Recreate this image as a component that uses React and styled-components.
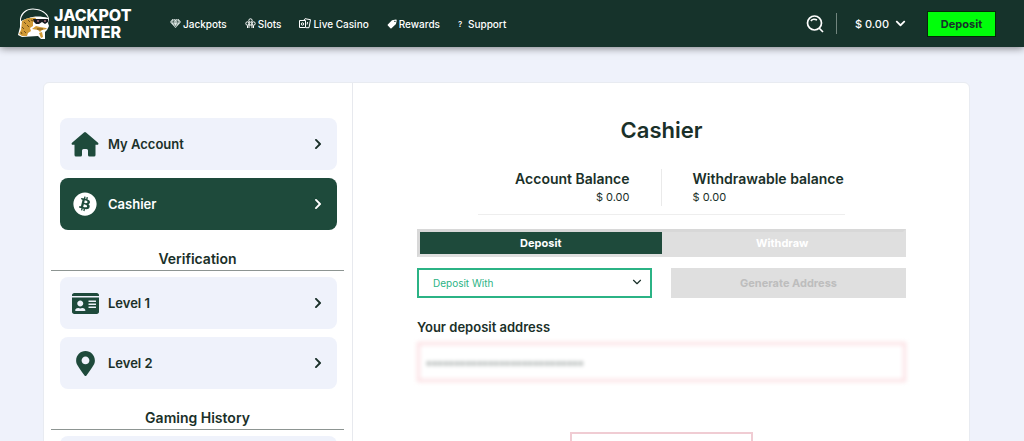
import React from 'react'
import styled, { createGlobalStyle } from 'styled-components'
import { FaChevronDown, FaBitcoin, FaIdCard, FaChevronRight, FaMapMarkerAlt } from 'react-icons/fa'
import { LuChevronDown } from 'react-icons/lu'

const COLORS = {
  HEADER: '#16332b',
  GREEN: '#1e4a3b',
  TEXT: '#1a3029',
  PAGE: '#eff2fb',
  LIME: '#00ff0a',
  TEAL: '#2bb385',
  GREY: '#dfdfdf',
  GOLD: '#d19a35',
}

const GlobalStyle = createGlobalStyle`
  * {
    box-sizing: border-box;
  }
  html {
    scrollbar-width: none;
  }
  body {
    margin: 0;
    background: ${COLORS.PAGE};
    color: ${COLORS.TEXT};
    font-family: Inter, sans-serif;
  }
  button,
  select,
  input {
    font-family: inherit;
    margin: 0;
  }
`

const Header = styled.header`
  display: flex;
  align-items: center;
  height: 47px;
  padding: 0 28px 0 16px;
  background: ${COLORS.HEADER};
  color: white;
  box-shadow: 0 1px 8px rgba(0, 0, 0, 0.5);
`

const Brand = styled.a`
  display: flex;
  align-items: center;
  gap: 4px;
  width: 154px;
  color: white;
  font-size: 16px;
  line-height: 17px;
  font-weight: 800;
  text-decoration: none;
`

const Nav = styled.nav`
  display: flex;
  gap: 18px;
  flex: 1;
`

const NavLink = styled.a`
  display: flex;
  align-items: center;
  gap: 2px;
  color: white;
  font-size: 10px;
  font-weight: 500;
  white-space: nowrap;
  text-decoration: none;
`

const Mark = styled.span`
  width: 8px;
  font-size: 8px;
`

const IconButton = styled.button`
  display: flex;
  padding: 0;
  border: 0;
  background: none;
  color: white;
`

const Wallet = styled.button`
  display: flex;
  align-items: center;
  gap: 6px;
  height: 21px;
  margin-left: 12px;
  padding: 0 0 0 18px;
  border: 0;
  border-left: 1px solid #71857e;
  background: none;
  color: white;
  font-size: 11px;
  font-weight: 500;
`

const DepositButton = styled.button`
  width: 69px;
  height: 26px;
  margin-left: 21px;
  padding: 0;
  border: 1px solid #062808;
  background: ${COLORS.LIME};
  color: ${COLORS.HEADER};
  font-size: 11px;
  font-weight: 700;
`

const Card = styled.div`
  display: flex;
  margin: 35px 54px 0 43px;
  border: 1px solid #e8ebf1;
  border-radius: 6px;
  background: white;
`

const Sidebar = styled.aside`
  flex: none;
  width: 309px;
  padding: 35px 15px 0 16px;
  border-right: 1px solid #e7e9ee;
`

const Menu = styled.div`
  display: flex;
  flex-direction: column;
  gap: 8px;
`

const MenuItem = styled.a`
  display: flex;
  align-items: center;
  height: 52px;
  padding: 0 13px 0 10px;
  border-radius: 8px;
  background: ${(props) => (props.$active ? COLORS.GREEN : COLORS.PAGE)};
  color: ${(props) => (props.$active ? 'white' : COLORS.TEXT)};
  font-size: 13px;
  font-weight: 600;
  text-decoration: none;
`

const MenuIcon = styled.span`
  display: flex;
  justify-content: center;
  width: 30px;
  margin-right: 8px;
  color: ${(props) => (props.$active ? 'white' : COLORS.GREEN)};
`

const MenuLabel = styled.span`
  flex: 1;
`

const GroupTitle = styled.h2`
  margin: 20px -7px 6px -9px;
  padding-bottom: 2px;
  border-bottom: 1px solid #8d9592;
  font-size: 14px;
  line-height: 18px;
  font-weight: 600;
  text-align: center;
`

const Main = styled.main`
  flex: 1;
  min-width: 0;
  padding: 32px 63px 40px 64px;
`

const Title = styled.h1`
  margin: 0 0 24px;
  font-size: 22px;
  line-height: 30px;
  font-weight: 600;
  text-align: center;
`

const Balances = styled.div`
  display: grid;
  grid-template-columns: 1fr 1fr;
  margin: 0 61px;
  padding-bottom: 8px;
  border-bottom: 1px solid #eeeeee;
`

const Balance = styled.div`
  padding-left: 31px;
  font-size: 11px;
  line-height: 18px;
  white-space: nowrap;

  &:first-child {
    padding: 0 31px 0 0;
    border-right: 1px solid #eaeaea;
    text-align: right;
  }
`

const BalanceName = styled.div`
  font-size: 14px;
  line-height: 19px;
  font-weight: 600;
`

const Tabs = styled.div`
  display: grid;
  grid-template-columns: 1fr 1fr;
  margin-top: 14px;
  border: 3px solid ${COLORS.GREY};
  border-top-color: #d8d8d8;
  border-left-color: #d8d8d8;
  background: ${COLORS.GREY};
`

const Tab = styled.button`
  height: 22px;
  padding: 0;
  border: 0;
  background: ${(props) => (props.$active ? COLORS.GREEN : COLORS.GREY)};
  color: white;
  font-size: 11px;
  font-weight: 700;
`

const FormRow = styled.div`
  display: grid;
  grid-template-columns: 1fr 1fr;
  gap: 19px;
  margin-top: 11px;
`

const SelectBox = styled.div`
  position: relative;

  svg {
    position: absolute;
    top: 7px;
    right: 8px;
    pointer-events: none;
  }
`

const Select = styled.select`
  display: block;
  width: 100%;
  height: 30px;
  padding: 0 14px;
  border: 2px solid ${COLORS.TEAL};
  border-radius: 0;
  appearance: none;
  background: white;
  color: ${COLORS.TEAL};
  font-size: 10px;
`

const GenerateButton = styled.button`
  height: 30px;
  border: 0;
  background: ${COLORS.GREY};
  color: #bdbdbd;
  font-size: 11px;
  font-weight: 700;
`

const AddressLabel = styled.label`
  display: block;
  margin: 20px 0 6px;
  font-size: 13px;
  line-height: 18px;
  font-weight: 600;
`

const Address = styled.input`
  display: block;
  width: 100%;
  height: 40px;
  padding: 0 6px;
  border: 3px solid #fbdfe2;
  border-radius: 0;
  background: white;
  color: #4d5a56;
  font-size: 10px;
  filter: blur(2px);
`

const QrFrame = styled.div`
  width: 183px;
  height: 183px;
  margin: 50px auto 0;
  border: 2px solid #f0ccd3;
`

const Logo = () => (
  <svg width="34" height="34" viewBox="0 0 34 34" fill="none">
    <path
      d="M4 12C5 4 13 0 21 2C28 3 33 8 33 12L32 16L33 19L31 23L29 25L29 32L25 32L22 29L6 30L2 28L4 20Z"
      fill="white"
    />
    <path d="M5 12C7 4 14 1 21 3C27 4 31 8 32 11C26 9 17 9 13 11C9 12 7 13 5 14Z" fill={COLORS.HEADER} />
    <path
      d="M6 14C10 11 15 10 20 11L19 14L17 15L17 19L14 21L15 24L12 26L11 29L6 29L3 27L5 23Z"
      fill={COLORS.GOLD}
    />
    <path d="M8 15l2 2M12 13l2 2M6 20l2 2M11 18l2 2M8 24l2 2M5 25l1 2M15 13l2 1" stroke="#6e4d17" />
    <path d="M17 12H32V15L29 17L26 15L23 17H20L18 15Z" fill="#171b20" />
    <path d="M21 14h2M28 14h2" stroke="#e893a0" />
    <path d="M16 22L20 19L24 20L30 21L31 22L26 23L24 25L22 23Z" fill={COLORS.GOLD} />
    <path d="M21 22h6" stroke="#6e4d17" />
    <path d="M23 26L26 25L27 30L25 31Z" fill={COLORS.GOLD} />
  </svg>
)

const SearchIcon = () => (
  <svg width="18" height="18" viewBox="0 0 18 18" fill="none" stroke="currentColor" strokeWidth="1.7">
    <circle cx="8.5" cy="8" r="7" />
    <path d="M13 13L17 17M5 6C6 4 9 4 11 5" />
  </svg>
)

const GemIcon = () => (
  <svg width="11" height="11" viewBox="0 0 11 11">
    <path d="M2.5 1h6L11 4 5.5 10 0 4Z" fill="#dfe8e5" />
    <path d="M.5 4h10M3.5 1L3 4l2.5 5L8 4 7.5 1M3 4l2.5-3L8 4" fill="none" stroke={COLORS.HEADER} strokeWidth=".5" />
  </svg>
)

const CloverIcon = () => (
  <svg width="11" height="11" viewBox="0 0 11 11" fill="none" stroke="white">
    <circle cx="5.5" cy="2.5" r="1.7" />
    <circle cx="2.5" cy="5.5" r="1.7" />
    <circle cx="8.5" cy="5.5" r="1.7" />
    <path d="M4 4v6M7 4v6M2.5 7.5v2.5M8.5 7.5v2.5M4 7h3" />
  </svg>
)

const CardsIcon = () => (
  <svg width="12" height="11" viewBox="0 0 12 11" fill="none" stroke="white">
    <path d="M.5 2.5h6v7h-6zM5 2L6 .7l5.5 1-1.5 8H7" />
    <circle cx="3.5" cy="6" r="1.2" />
    <path d="M8.5 4l-.4 2.5" />
  </svg>
)

const TagIcon = () => (
  <svg width="10" height="10" viewBox="0 0 10 10">
    <path d="M5 1.2L9 .6Q9.8.6 9.7 1.5L9 5L4.5 9.2Q4 9.7 3.4 9.2L.8 6.6Q.3 6 .8 5.4Z" fill="white" />
    <circle cx="7.9" cy="2.4" r=".7" fill={COLORS.HEADER} />
  </svg>
)

const HomeIcon = () => (
  <svg width="28" height="26" viewBox="0 0 28 26" fill="currentColor">
    <path d="M13 1.5Q14 .6 15 1.5L27 11.8Q28 13 27 13.8H24.5V24Q24.5 25.5 23 25.5H18.5Q17 25.5 17 24V19.5Q17 18 15.5 18H12.5Q11 18 11 19.5V24Q11 25.5 9.5 25.5H5Q3.5 25.5 3.5 24V13.8H1Q0 13 1 11.8Z" />
  </svg>
)

const NAV = [
  { name: 'Jackpots', icon: <GemIcon /> },
  { name: 'Slots', icon: <CloverIcon /> },
  { name: 'Live Casino', icon: <CardsIcon /> },
  { name: 'Rewards', icon: <TagIcon /> },
  { name: 'Support', icon: <Mark>?</Mark> },
]

const Item = ({ name, icon, active }) => (
  <MenuItem href="#" $active={active}>
    <MenuIcon $active={active}>{icon}</MenuIcon>
    <MenuLabel>{name}</MenuLabel>
    <FaChevronRight size={12} />
  </MenuItem>
)

const App = () => (
  <>
    <GlobalStyle />
    <Header>
      <Brand href="#">
        <Logo />
        <span>
          JACKPOT
          <br />
          HUNTER
        </span>
      </Brand>
      <Nav>
        {NAV.map(({ name, icon }) => (
          <NavLink href="#" key={name}>
            {icon}
            {name}
          </NavLink>
        ))}
      </Nav>
      <IconButton aria-label="Search">
        <SearchIcon />
      </IconButton>
      <Wallet>
        $ 0.00
        <FaChevronDown size={11} />
      </Wallet>
      <DepositButton>Deposit</DepositButton>
    </Header>
    <Card>
      <Sidebar>
        <Menu>
          <Item name="My Account" icon={<HomeIcon />} />
          <Item name="Cashier" icon={<FaBitcoin size={24} />} active />
        </Menu>
        <GroupTitle>Verification</GroupTitle>
        <Menu>
          <Item name="Level 1" icon={<FaIdCard size={27} />} />
          <Item name="Level 2" icon={<FaMapMarkerAlt size={25} />} />
        </Menu>
        <GroupTitle>Gaming History</GroupTitle>
        <Menu>
          <MenuItem as="div" />
        </Menu>
      </Sidebar>
      <Main>
        <Title>Cashier</Title>
        <Balances>
          <Balance>
            <BalanceName>Account Balance</BalanceName>$ 0.00
          </Balance>
          <Balance>
            <BalanceName>Withdrawable balance</BalanceName>$ 0.00
          </Balance>
        </Balances>
        <Tabs>
          <Tab $active>Deposit</Tab>
          <Tab>Withdraw</Tab>
        </Tabs>
        <FormRow>
          <SelectBox>
            <Select aria-label="Deposit With">
              <option>Deposit With</option>
            </Select>
            <LuChevronDown size={14} />
          </SelectBox>
          <GenerateButton>Generate Address</GenerateButton>
        </FormRow>
        <AddressLabel htmlFor="address">Your deposit address</AddressLabel>
        <Address id="address" readOnly value="••••••••••••••••••••••••••••" />
        <QrFrame />
      </Main>
    </Card>
  </>
)

export default App
